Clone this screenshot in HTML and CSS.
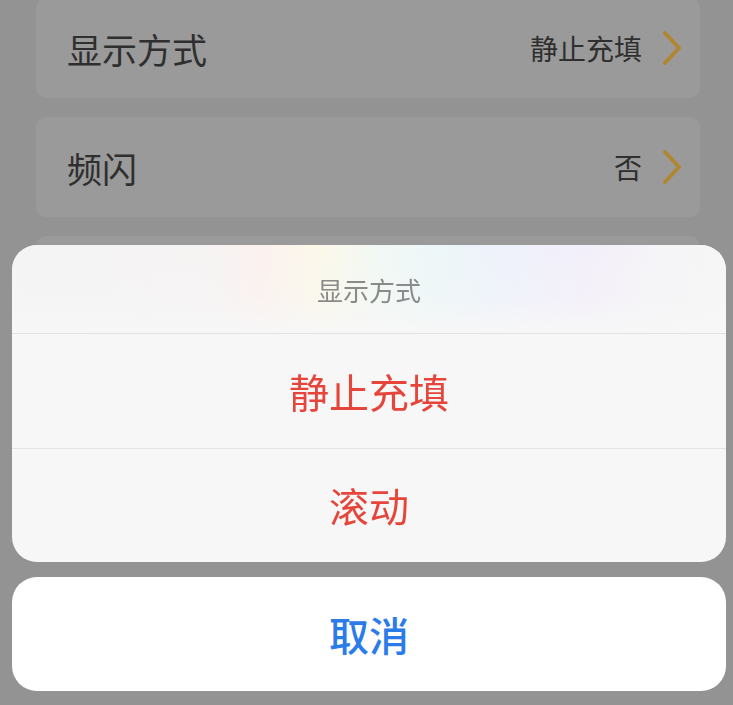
FILE: index.html
```html
<!DOCTYPE html>
<html lang="zh-CN">
<head>
<meta charset="utf-8">
<title>显示方式</title>
<link rel="stylesheet" href="styles.css">
</head>
<body>
<div class="page">
  <div class="card">
    <span class="label">显示方式</span>
    <span class="value">静止充填</span>
    <svg class="chev" width="20" height="34" viewBox="0 0 20 34"><polyline points="3,2 17,17 3,32" fill="none" stroke="#b0862f" stroke-width="3.8" stroke-linecap="round" stroke-linejoin="round"/></svg>
  </div>
  <div class="card">
    <span class="label">频闪</span>
    <span class="value">否</span>
    <svg class="chev" width="20" height="34" viewBox="0 0 20 34"><polyline points="3,2 17,17 3,32" fill="none" stroke="#b0862f" stroke-width="3.8" stroke-linecap="round" stroke-linejoin="round"/></svg>
  </div>
  <div class="card"></div>
</div>
<div class="overlay">
  <div class="sheet">
    <div class="sheet-title">显示方式</div>
    <div class="option option-first">静止充填</div>
    <div class="option">滚动</div>
  </div>
  <div class="cancel">取消</div>
</div>
</body>
</html>
```

FILE: styles.css
```css
html, body {
  margin: 0;
  padding: 0;
}
body {
  width: 733px;
  height: 705px;
  overflow: hidden;
  background: #939393;
  font-family: "Noto Sans CJK SC", "Noto Sans", sans-serif;
}
.page {
  display: flex;
  flex-direction: column;
  gap: 19px;
  margin-top: -2px;
  padding: 0 33px 0 36px;
}
.card {
  height: 100px;
  background: #9a9a9a;
  border-radius: 10px;
  display: flex;
  align-items: center;
  padding: 0 18px 0 31px;
}
.label {
  flex: 1;
  font-size: 35px;
  color: #2f2f2f;
  line-height: 1;
}
.value {
  font-size: 28px;
  color: #2f2f2f;
  line-height: 1;
  margin-right: 20px;
}
.chev {
  display: block;
}
.overlay {
  position: fixed;
  left: 12px;
  top: 245px;
  width: 714px;
  display: flex;
  flex-direction: column;
  gap: 15px;
}
.sheet {
  height: 317px;
  border-radius: 25px;
  background: #f7f7f7;
  display: flex;
  flex-direction: column;
  overflow: hidden;
}
.sheet-title {
  height: 88px;
  display: flex;
  align-items: center;
  justify-content: center;
  font-size: 26px;
  color: #8a8a8a;
  border-bottom: 1px solid #e2e2e2;
  background:
    linear-gradient(180deg, rgba(247,247,247,0) 0%, rgba(247,247,247,0.2) 60%, #f7f7f7 100%),
    linear-gradient(90deg, #f4f4f4 0%, #f6f3f3 28%, #fbf1ef 35%, #fbf8ea 43%, #f1f8f5 52%, #edf6f8 60%, #eef2fb 68%, #f3effa 80%, #f5f4f7 90%, #f6f6f6 100%);
}
.option {
  flex: 1;
  display: flex;
  align-items: center;
  justify-content: center;
  font-size: 40px;
  color: #e5453b;
}
.option-first {
  border-bottom: 1px solid #e4e4e4;
}
.cancel {
  height: 114px;
  border-radius: 25px;
  background: #ffffff;
  display: flex;
  align-items: center;
  justify-content: center;
  font-size: 40px;
  font-weight: 500;
  color: #2b7ce9;
}
```
